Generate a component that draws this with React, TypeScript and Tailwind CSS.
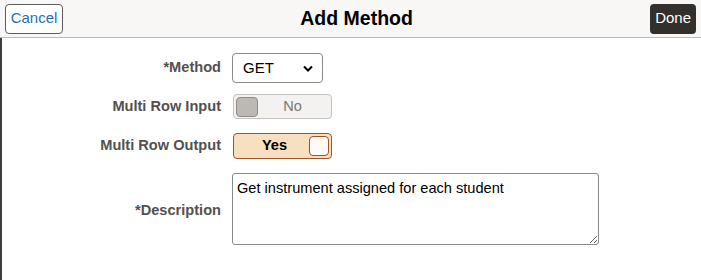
export default function App() {
  return (
    <div className="w-[701px] h-[280px] bg-white font-['Liberation_Sans',Arial,sans-serif] relative overflow-hidden">
      <div className="flex items-center justify-between h-[38px] px-[5px] bg-[#f8f7f6] border-b border-[#bdbab5]">
        <button className="h-[30px] w-[58px] rounded-[4px] border border-[#5e5c5a] bg-white text-[15px] text-[#1f6fb5]">
          Cancel
        </button>
        <h1 className="text-[19.5px] font-bold text-black">Add Method</h1>
        <button className="h-[30px] px-[5px] rounded-[4px] bg-[#322f2c] text-[15px] text-white">
          Done
        </button>
      </div>
      <div className="absolute left-0 top-[38px] bottom-0 w-[2px] bg-[#3e3c3a]" />

      <div className="flex flex-col pt-[15px]">
        <div className="flex items-center">
          <span className="w-[221px] text-right text-[14.6px] font-bold text-[#535150]">*Method</span>
          <div className="ml-[11px] w-[91px] h-[30px] border border-[#8c8986] rounded-[4px] flex items-center justify-between pl-[10px] pr-[9px]">
            <span className="text-[15px] text-black">GET</span>
            <svg width="10" height="7" viewBox="0 0 10 7">
              <path d="M1 1.5 L5 5.5 L9 1.5" fill="none" stroke="#000" strokeWidth="2" />
            </svg>
          </div>
        </div>

        <div className="flex items-center mt-[11px]">
          <span className="w-[221px] text-right text-[14.6px] font-bold text-[#535150]">Multi Row Input</span>
          <div className="ml-[12px] w-[99px] h-[25px] border border-[#c5c2bf] rounded-[4px] bg-[#f3f2f1] flex items-center px-[2px]">
            <div className="w-[22px] h-[20px] rounded-[4px] bg-[#bcb9b5] border border-[#8f8c88]" />
            <span className="flex-1 text-center text-[14.6px] text-[#7a7773] pr-[2px]">No</span>
          </div>
        </div>

        <div className="flex items-center mt-[14px]">
          <span className="w-[221px] text-right text-[14.6px] font-bold text-[#535150]">Multi Row Output</span>
          <div className="ml-[12px] w-[99px] h-[26px] border border-[#a0522d] rounded-[4px] bg-[#f7dfc0] flex items-center px-[2px]">
            <span className="flex-1 text-center text-[14.6px] font-bold text-black pl-[4px]">Yes</span>
            <div className="w-[20px] h-[20px] rounded-[4px] bg-[#fffaf4] border border-[#a0522d]" />
          </div>
        </div>

        <div className="flex items-center mt-[14px]">
          <span className="w-[221px] pt-[4px] text-right text-[14.6px] font-bold text-[#535150]">*Description</span>
          <textarea
            className="ml-[11px] w-[367px] h-[72px] border border-[#8c8986] rounded-[3px] px-[4px] pt-[4px] pb-[3px] text-[14.6px] text-black resize-y outline-none"
            defaultValue="Get instrument assigned for each student"
          />
        </div>
      </div>
    </div>
  );
}
